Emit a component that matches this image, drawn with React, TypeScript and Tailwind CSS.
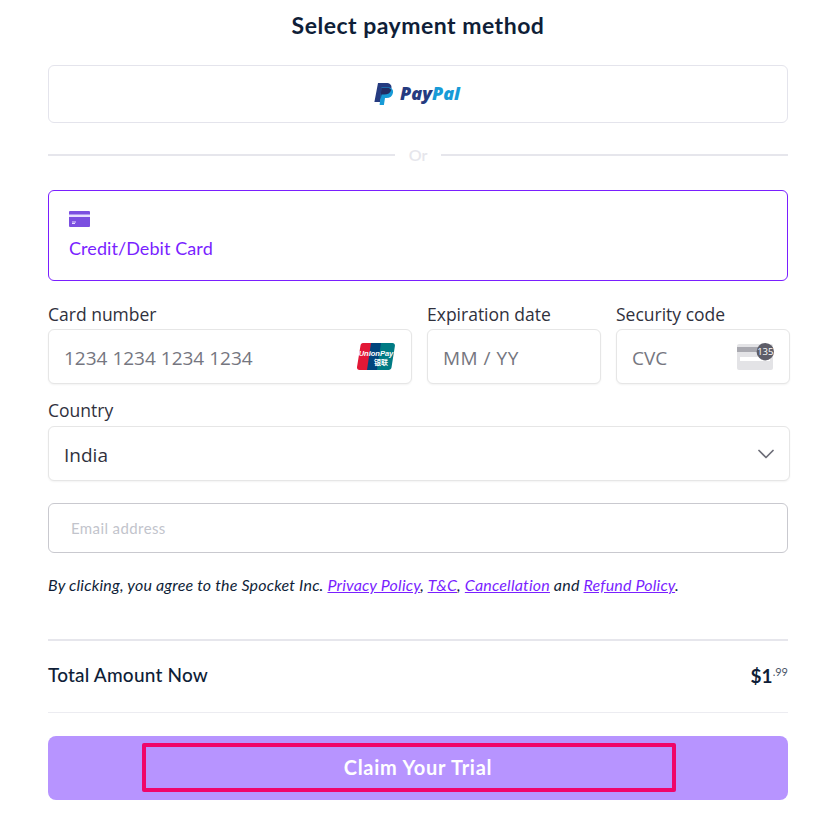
import { ChevronDown } from "lucide-react";

const FIELD = "flex items-center h-[55px] rounded-[6px] border border-[#e6e6e6] bg-white shadow-[0_1px_2px_rgba(0,0,0,0.05)] pl-[15px] pr-[15px] text-[19px] font-['Open_Sans',sans-serif]";
const LABEL = "text-[17.5px] leading-[22px] text-[#30313d] font-['Open_Sans',sans-serif]";

function PayPalMark() {
  return (
    <svg width="20" height="22" viewBox="0 0 20 22">
      <path d="M4 0h8c4 0 6 2 5.400 5.400C16.700 9.600 14 11.500 10 11.500H7.600L6.200 19H0.400z" fill="#253b80" />
      <path d="M7.500 4.500h6.500c3.500 0 5.600 2 5 5.200C18.400 13 16 15 12.500 15H11l-1.100 7H5.600z" fill="#179bd7" />
      <path d="M7.300 5h6c2 0 3.500.5 3.800 2-.7 3-3.300 4.500-7.100 4.500H7.600L6.500 17z" fill="#222d65" />
    </svg>
  );
}

function UnionPayMark() {
  return (
    <svg width="38" height="27" viewBox="0 0 38 27">
      <path d="M6 0h11L13 27H2.500C.8 27-.3 25.800 0 24L3.500 2.500C3.800 1 4.500 0 6 0z" fill="#e21836" />
      <path d="M14 0h12l-4 27H10z" fill="#00447c" />
      <path d="M24 0h11.500c1.700 0 2.700 1.200 2.400 3L34.500 24.500c-.3 1.500-1.300 2.500-3 2.500H20z" fill="#007b84" />
      <text x="19" y="13" textAnchor="middle" fontSize="7.500" fontWeight="700" fontStyle="italic" fill="#fff" fontFamily="'Liberation Sans', sans-serif">UnionPay</text>
      <text x="24" y="22" textAnchor="middle" fontSize="7" fontWeight="700" fill="#fff" fontFamily="'Noto Sans CJK SC', sans-serif">银联</text>
    </svg>
  );
}

function CvcMark() {
  return (
    <svg width="37" height="28" viewBox="0 0 37 28">
      <rect x="0" y="1" width="36" height="26" rx="2" fill="#e3e3e6" />
      <rect x="0" y="4" width="36" height="5" fill="#a9a9b0" />
      <rect x="3" y="14" width="30" height="4" fill="#fff" />
      <circle cx="28.300" cy="8.700" r="8.700" fill="#5d5d68" />
      <text x="28.300" y="12" textAnchor="middle" fontSize="9.500" fill="#fff" fontFamily="'Open Sans', sans-serif">135</text>
    </svg>
  );
}

export default function App() {
  return (
    <div className="min-h-screen bg-white font-['Lato',sans-serif] text-[#0f1e38]">
      <div className="w-[740px] ml-[48px] pt-[11px]">
        <h1 className="text-center text-[23px] leading-[28px] font-bold tracking-[0.5px] text-[#0f1e38]">
          Select payment method
        </h1>

        <div className="mt-[26px] h-[58px] pr-[2px] rounded-[6px] border border-[#e4e4ec] flex items-center justify-center gap-[6px]">
          <PayPalMark />
          <span className="text-[18px] leading-[22px] pb-[2px] font-black italic text-[#253b80] font-['Open_Sans',sans-serif]">
            Pay<span className="text-[#179bd7]">Pal</span>
          </span>
        </div>

        <div className="mt-[22px] flex items-center h-[20px]">
          <div className="flex-1 h-[2px] bg-[#e6e6ec]" />
          <span className="w-[46px] text-center text-[16px] font-semibold text-[#e6e6ec]">Or</span>
          <div className="flex-1 h-[2px] bg-[#e6e6ec]" />
        </div>

        <div className="mt-[25px] h-[91px] rounded-[6px] border border-[#7a1fff] px-5 pt-[20px]">
          <svg width="21" height="16" viewBox="0 0 21 16" className="block">
            <rect width="21" height="16" rx="1" fill="#7b4fe0" />
            <rect y="3.500" width="21" height="2.500" fill="#e6deff" />
            <rect x="3" y="10.500" width="4" height="1" fill="#e6deff" />
            <rect x="3" y="12" width="3" height="1" fill="#e6deff" />
          </svg>
          <div className="mt-[9px] text-[18px] leading-[24px] tracking-[0.08px] text-[#7a1fff]">Credit/Debit Card</div>
        </div>

        <div className="w-[742px] mt-[22px] grid grid-cols-[364px_174px_174px] gap-x-[15px]">
          <div>
            <div className={`${LABEL} mb-[4px]`}>Card number</div>
            <div className={`${FIELD} justify-between pr-[16px] text-[#757680]`}>
              <span className="pt-[3px]">1234 1234 1234 1234</span>
              <UnionPayMark />
            </div>
          </div>
          <div>
            <div className={`${LABEL} mb-[4px]`}>Expiration date</div>
            <div className={`${FIELD} text-[#757680]`}>
              <span className="pt-[3px] tracking-[0.5px]">MM / YY</span>
            </div>
          </div>
          <div>
            <div className={`${LABEL} mb-[4px]`}>Security code</div>
            <div className={`${FIELD} justify-between text-[#757680]`}>
              <span className="pt-[3px]">CVC</span>
              <CvcMark />
            </div>
          </div>
        </div>

        <div className="w-[742px] mt-[15px]">
          <div className={`${LABEL} mb-[5px]`}>Country</div>
          <div className={`${FIELD} h-[54px] justify-between text-[#30313d]`}>
            <span className="pt-[3px]">India</span>
            <ChevronDown size={28} strokeWidth={1.5} className="mr-[-6px] text-[#6d6e78]" />
          </div>
        </div>

        <div className="mt-[22px] h-[50px] rounded-[6px] border border-[#c9c9cf] flex items-center px-[22px] text-[15px] tracking-[0.4px] text-[#c2c4cc]">
          Email address
        </div>

        <p className="mt-[22px] text-[16px] leading-[20px] italic tracking-[0.19px] text-[#0f1e38]">
          By clicking, you agree to the Spocket Inc.{" "}
          <a className="text-[#7a1fff] underline">Privacy Policy</a>,{" "}
          <a className="text-[#7a1fff] underline">T&amp;C</a>,{" "}
          <a className="text-[#7a1fff] underline">Cancellation</a> and{" "}
          <a className="text-[#7a1fff] underline">Refund Policy</a>.
        </p>

        <div className="mt-[44px] h-[74px] pb-[2px] border-t-2 border-b border-t-[#e6e6ec] border-b-[#ececf1] flex items-center justify-between">
          <span className="text-[19px] tracking-[0.2px] font-medium">Total Amount Now</span>
          <span className="flex items-start">
            <span className="text-[19px] leading-[22px] font-bold">$1</span>
            <span className="text-[11px] leading-[14px] text-[#4a5568]">.99</span>
          </span>
        </div>

        <div className="mt-[23px] h-[64px] rounded-[8px] bg-[#b794ff] flex items-center justify-center">
          <div className="w-[534px] h-[49px] mr-[18px] mb-[1px] pl-[18px] pb-[2px] border-[4px] border-[#f0056a] rounded-[2px] flex items-center justify-center text-[20px] font-bold text-white tracking-[0.75px]">
            Claim Your Trial
          </div>
        </div>
      </div>
    </div>
  );
}
